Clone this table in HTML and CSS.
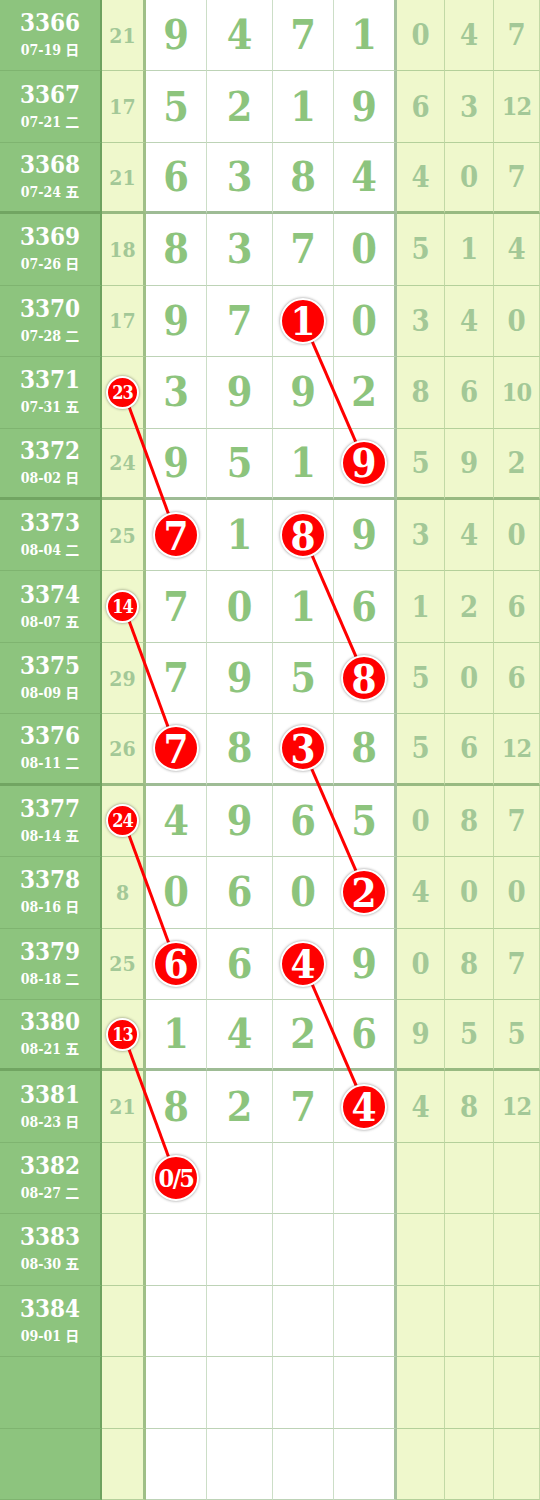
FILE: index.html
```html
<!DOCTYPE html>
<html lang="zh">
<head>
  <meta charset="UTF-8" />
  <meta name="viewport" content="width=device-width, initial-scale=1.0"/>
  <title>走势图</title>
  <link rel="stylesheet" href="styles.css">
</head>
<body>
  <div class="board">
    <div class="row"><div class="issue"><b>3366</b><span>07-19 日</span></div><div class="sum">21</div><div class="d">9</div><div class="d">4</div><div class="d">7</div><div class="d end">1</div><div class="r">0</div><div class="r">4</div><div class="r">7</div></div>
    <div class="row"><div class="issue"><b>3367</b><span>07-21 二</span></div><div class="sum">17</div><div class="d">5</div><div class="d">2</div><div class="d">1</div><div class="d end">9</div><div class="r">6</div><div class="r">3</div><div class="r two">12</div></div>
    <div class="row group"><div class="issue"><b>3368</b><span>07-24 五</span></div><div class="sum">21</div><div class="d">6</div><div class="d">3</div><div class="d">8</div><div class="d end">4</div><div class="r">4</div><div class="r">0</div><div class="r">7</div></div>
    <div class="row"><div class="issue"><b>3369</b><span>07-26 日</span></div><div class="sum">18</div><div class="d">8</div><div class="d">3</div><div class="d">7</div><div class="d end">0</div><div class="r">5</div><div class="r">1</div><div class="r">4</div></div>
    <div class="row"><div class="issue"><b>3370</b><span>07-28 二</span></div><div class="sum">17</div><div class="d">9</div><div class="d">7</div><div class="d"><i class="ball">1</i></div><div class="d end">0</div><div class="r">3</div><div class="r">4</div><div class="r">0</div></div>
    <div class="row"><div class="issue"><b>3371</b><span>07-31 五</span></div><div class="sum"><i class="dot">23</i></div><div class="d">3</div><div class="d">9</div><div class="d">9</div><div class="d end">2</div><div class="r">8</div><div class="r">6</div><div class="r two">10</div></div>
    <div class="row group"><div class="issue"><b>3372</b><span>08-02 日</span></div><div class="sum">24</div><div class="d">9</div><div class="d">5</div><div class="d">1</div><div class="d end"><i class="ball">9</i></div><div class="r">5</div><div class="r">9</div><div class="r">2</div></div>
    <div class="row"><div class="issue"><b>3373</b><span>08-04 二</span></div><div class="sum">25</div><div class="d"><i class="ball">7</i></div><div class="d">1</div><div class="d"><i class="ball">8</i></div><div class="d end">9</div><div class="r">3</div><div class="r">4</div><div class="r">0</div></div>
    <div class="row"><div class="issue"><b>3374</b><span>08-07 五</span></div><div class="sum"><i class="dot">14</i></div><div class="d">7</div><div class="d">0</div><div class="d">1</div><div class="d end">6</div><div class="r">1</div><div class="r">2</div><div class="r">6</div></div>
    <div class="row"><div class="issue"><b>3375</b><span>08-09 日</span></div><div class="sum">29</div><div class="d">7</div><div class="d">9</div><div class="d">5</div><div class="d end"><i class="ball">8</i></div><div class="r">5</div><div class="r">0</div><div class="r">6</div></div>
    <div class="row group"><div class="issue"><b>3376</b><span>08-11 二</span></div><div class="sum">26</div><div class="d"><i class="ball">7</i></div><div class="d">8</div><div class="d"><i class="ball">3</i></div><div class="d end">8</div><div class="r">5</div><div class="r">6</div><div class="r two">12</div></div>
    <div class="row"><div class="issue"><b>3377</b><span>08-14 五</span></div><div class="sum"><i class="dot">24</i></div><div class="d">4</div><div class="d">9</div><div class="d">6</div><div class="d end">5</div><div class="r">0</div><div class="r">8</div><div class="r">7</div></div>
    <div class="row"><div class="issue"><b>3378</b><span>08-16 日</span></div><div class="sum">8</div><div class="d">0</div><div class="d">6</div><div class="d">0</div><div class="d end"><i class="ball">2</i></div><div class="r">4</div><div class="r">0</div><div class="r">0</div></div>
    <div class="row"><div class="issue"><b>3379</b><span>08-18 二</span></div><div class="sum">25</div><div class="d"><i class="ball">6</i></div><div class="d">6</div><div class="d"><i class="ball">4</i></div><div class="d end">9</div><div class="r">0</div><div class="r">8</div><div class="r">7</div></div>
    <div class="row group"><div class="issue"><b>3380</b><span>08-21 五</span></div><div class="sum"><i class="dot">13</i></div><div class="d">1</div><div class="d">4</div><div class="d">2</div><div class="d end">6</div><div class="r">9</div><div class="r">5</div><div class="r">5</div></div>
    <div class="row"><div class="issue"><b>3381</b><span>08-23 日</span></div><div class="sum">21</div><div class="d">8</div><div class="d">2</div><div class="d">7</div><div class="d end"><i class="ball">4</i></div><div class="r">4</div><div class="r">8</div><div class="r two">12</div></div>
    <div class="row"><div class="issue"><b>3382</b><span>08-27 二</span></div><div class="sum"></div><div class="d"><i class="ball guess">0/5</i></div><div class="d"></div><div class="d"></div><div class="d end"></div><div class="r"></div><div class="r"></div><div class="r"></div></div>
    <div class="row"><div class="issue"><b>3383</b><span>08-30 五</span></div><div class="sum"></div><div class="d"></div><div class="d"></div><div class="d"></div><div class="d end"></div><div class="r"></div><div class="r"></div><div class="r"></div></div>
    <div class="row"><div class="issue"><b>3384</b><span>09-01 日</span></div><div class="sum"></div><div class="d"></div><div class="d"></div><div class="d"></div><div class="d end"></div><div class="r"></div><div class="r"></div><div class="r"></div></div>
    <div class="row"><div class="issue"></div><div class="sum"></div><div class="d"></div><div class="d"></div><div class="d"></div><div class="d end"></div><div class="r"></div><div class="r"></div><div class="r"></div></div>
    <div class="row"><div class="issue"></div><div class="sum"></div><div class="d"></div><div class="d"></div><div class="d"></div><div class="d end"></div><div class="r"></div><div class="r"></div><div class="r"></div></div>

    <!-- connecting lines, drawn between ball centres -->
    <svg class="links" viewBox="0 0 540 1500" width="540" height="1500">
      <line x1="124" y1="392.9" x2="176.5" y2="535.7"/>
      <line x1="303.5" y1="321.4" x2="365.5" y2="464.3"/>
      <line x1="303.5" y1="535.7" x2="365.5" y2="678.6"/>
      <line x1="124" y1="607.1" x2="176.5" y2="750"/>
      <line x1="303.5" y1="750" x2="365.5" y2="892.9"/>
      <line x1="124" y1="821.4" x2="176.5" y2="964.3"/>
      <line x1="303.5" y1="964.3" x2="365.5" y2="1107.1"/>
      <line x1="124" y1="1035.7" x2="176.5" y2="1178.6"/>
    </svg>
  </div>
</body>
</html>
```
FILE: styles.css
```css
body {
  margin: 0;
  background-color: #fff;
  font-family: 'DejaVu Serif Condensed', 'DejaVu Serif', 'Noto Sans CJK SC', serif;
}

.board {
  position: relative;
  width: 540px;
  height: 1500px;
  display: grid;
  grid-template-rows: repeat(21, 1fr);
  overflow: hidden;
}

.row {
  display: grid;
  grid-template-columns: 102px 44px 61px 66px 61px 63px 48px 49px 46px;
  min-height: 0;
}

.row > div {
  display: flex;
  align-items: center;
  justify-content: center;
  border-bottom: 1px solid rgba(110, 160, 95, 0.45);
  border-right: 1px solid rgba(110, 160, 95, 0.35);
  min-height: 0;
}

.row.group > div {
  border-bottom: 3px solid rgba(95, 145, 80, 0.6);
}

.issue {
  flex-direction: column;
  background-color: #8dc47e;
  color: #fff;
  border-right: 2px solid rgba(90, 140, 75, 0.6) !important;
}

.issue b {
  font-weight: 600;
  font-size: 24px;
  line-height: 30px;
}

.issue span {
  font-weight: bold;
  font-size: 14px;
  line-height: 24px;
  font-family: 'DejaVu Serif Condensed', 'Noto Sans CJK SC', serif;
}

.sum {
  background-color: #eff8cc;
  color: #a3c897;
  font-weight: bold;
  font-size: 21px;
  border-right: 3px solid rgba(95, 145, 80, 0.55) !important;
}

.d {
  color: #8dc47d;
  font-weight: bold;
  font-size: 41px;
}

.d.end {
  border-right: 3px solid rgba(95, 145, 80, 0.55) !important;
}

.r {
  background-color: #eff8cc;
  color: #a3c897;
  font-weight: bold;
  font-size: 29px;
}

.r.two {
  font-size: 25px;
  letter-spacing: -1px;
}

.links {
  position: absolute;
  left: 0;
  top: 0;
  z-index: 1;
  pointer-events: none;
}

.links line {
  stroke: #f00;
  stroke-width: 3;
}

.ball, .dot {
  position: relative;
  z-index: 2;
  display: flex;
  align-items: center;
  justify-content: center;
  font-style: normal;
  color: #fff;
  background-color: #f00;
  border: 2px solid #fff;
  border-radius: 50%;
  box-shadow: 0 0 3px rgba(0, 0, 0, 0.45);
  box-sizing: border-box;
}

.ball {
  width: 46px;
  height: 46px;
  font-size: 40px;
  font-weight: bold;
}

.ball.guess {
  font-size: 25px;
  letter-spacing: -1.5px;
}

.dot {
  width: 33px;
  height: 33px;
  font-size: 18px;
  font-weight: bold;
  letter-spacing: -1px;
}
```
